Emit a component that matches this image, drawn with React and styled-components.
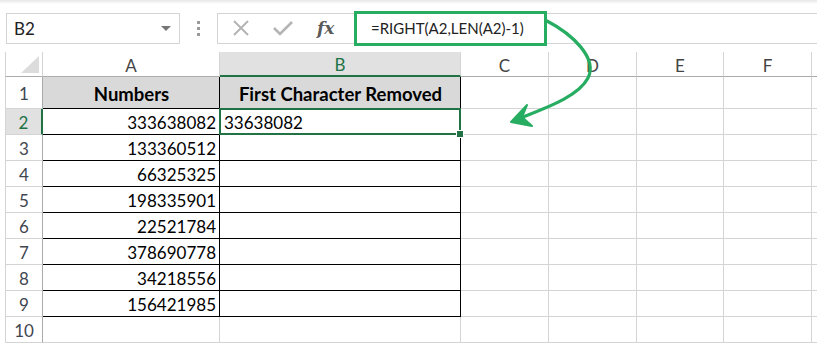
import React from 'react';
import styled, {createGlobalStyle} from 'styled-components';

//base page styles
const GlobalStyle = createGlobalStyle`
	body{
		margin: 0;
		background: #ffffff;
		font-family: Lato, "Open Sans", sans-serif;
	}
`

const columns = ['A', 'B', 'C', 'D', 'E', 'F'];
const numbers = ['333638082', '133360512', '66325325', '198335901', '22521784', '378690778', '34218556', '156421985'];

function App(){
	//builds the rows 2-10 of the sheet
	function getRows(){
		const rows = [];
		for(let r = 2; r <= 10; r++){
			const value = numbers[r - 2];
			const inTable = r <= 9;
			rows.push(
				<React.Fragment key={r}>
					<RowHead active={r === 2}>{r}</RowHead>
					<Cell table={inTable} align="right">{value}</Cell>
					<Cell table={inTable} selected={r === 2}>{r === 2 ? '33638082' : ''}</Cell>
					{columns.slice(2).map((c) => <Cell key={c}/>)}
					<Cell/>
				</React.Fragment>
			)
		}
		return rows;
	}

	return(
		<Page>
			<GlobalStyle/>
			<TopStrip/>
			<FormulaBar>
				<NameBox>
					<span>B2</span>
					<DropArrow/>
				</NameBox>
				<Grip>
					<i/><i/><i/>
				</Grip>
				<FxButtons>
					<svg width="20" height="20" viewBox="0 0 20 20">
						<path d="M3 3 L17 17 M17 3 L3 17" stroke="#b4b4b4" strokeWidth="2" fill="none"/>
					</svg>
					<svg width="22" height="20" viewBox="0 0 22 20">
						<path d="M2 10 L8 16 L20 4" stroke="#b4b4b4" strokeWidth="2.6" fill="none"/>
					</svg>
					<Fx>fx</Fx>
				</FxButtons>
				<FormulaInput>
					<Highlight>=RIGHT(A2,LEN(A2)-1)</Highlight>
				</FormulaInput>
			</FormulaBar>
			<Sheet>
				<Corner>
					<svg width="18" height="17" viewBox="0 0 18 17">
						<polygon points="18,0 18,17 0,17" fill="#dcdcdc"/>
					</svg>
				</Corner>
				{columns.map((c) => (
					<ColHead key={c} active={c === 'B'}>{c}</ColHead>
				))}
				<ColHead/>
				<RowHead>1</RowHead>
				<Cell table header align="center">Numbers</Cell>
				<Cell table header align="center">First Character Removed</Cell>
				{columns.slice(2).map((c) => <Cell key={c}/>)}
				<Cell/>
				{getRows()}
			</Sheet>
			<Arrow width="817" height="347" viewBox="0 0 817 347">
				<path d="M547 21 C 572 34, 598 58, 588 78 C 578 97, 545 108, 518 119" stroke="#27ad61" strokeWidth="3.2" fill="none" strokeLinecap="round"/>
				<polygon points="511,122 527,105 522,117 532,126" fill="#27ad61" stroke="#27ad61" strokeWidth="2" strokeLinejoin="round"/>
			</Arrow>
		</Page>
	);
}

const Page = styled.div`
	position: relative;
	width: 817px;
	height: 347px;
	overflow: hidden;
	background: #ffffff;
`

const TopStrip = styled.div`
	height: 4px;
	background: linear-gradient(#e6e6e6, #ffffff);
`

const FormulaBar = styled.div`
	display: flex;
	align-items: center;
	height: 48px;
	padding-left: 6px;
`

const NameBox = styled.div`
	box-sizing: border-box;
	width: 174px;
	height: 31px;
	border: 1px solid #d4d4d4;
	display: flex;
	align-items: center;
	justify-content: space-between;
	padding: 0 8px 0 7px;
	font-size: 17px;
	color: #222;
`

const DropArrow = styled.span`
	width: 0;
	height: 0;
	border-left: 5px solid transparent;
	border-right: 5px solid transparent;
	border-top: 5px solid #777;
`

const Grip = styled.div`
	width: 37px;
	display: flex;
	flex-direction: column;
	align-items: center;
	gap: 3px;
	i{
		width: 3px;
		height: 3px;
		background: #9a9a9a;
	}
`

const FxButtons = styled.div`
	box-sizing: border-box;
	width: 137px;
	height: 31px;
	border: 1px solid #d4d4d4;
	border-right: none;
	display: flex;
	align-items: center;
	padding-left: 13px;
	gap: 21px;
`

const Fx = styled.span`
	font-family: "DejaVu Serif", "Liberation Serif", serif;
	font-style: italic;
	font-weight: 700;
	font-size: 17px;
	color: #5a5a5a;
	margin-left: 2px;
`

const FormulaInput = styled.div`
	flex: 1;
	box-sizing: border-box;
	height: 31px;
	border-top: 1px solid #d4d4d4;
	border-bottom: 1px solid #d4d4d4;
	display: flex;
	align-items: center;
`

const Highlight = styled.div`
	box-sizing: border-box;
	width: 193px;
	height: 35px;
	border: 3px solid #27ad61;
	display: flex;
	align-items: center;
	padding-left: 14px;
	font-size: 15px;
	color: #222;
	white-space: nowrap;
`

const Sheet = styled.div`
	display: grid;
	grid-template-columns: 38px 177px 241px 88px 88px 87px 88px 1fr;
	grid-template-rows: 25px 32px repeat(9, 26px);
	margin-left: 5px;
	font-size: 17px;
`

const Corner = styled.div`
	box-sizing: border-box;
	border-left: 1px solid #d4d4d4;
	border-right: 1px solid #d4d4d4;
	border-bottom: 1px solid #ababab;
	display: flex;
	align-items: flex-end;
	justify-content: flex-end;
	padding: 0 3px 3px 0;
`

const ColHead = styled.div`
	box-sizing: border-box;
	display: flex;
	align-items: center;
	justify-content: center;
	background: ${(props) => props.active ? '#e1e1e1' : '#ffffff'};
	color: ${(props) => props.active ? '#217346' : '#444'};
	border-right: 1px solid #d4d4d4;
	border-bottom: ${(props) => props.active ? '2px solid #217346' : '1px solid #ababab'};
	padding-top: 2px;
`

const RowHead = styled.div`
	box-sizing: border-box;
	display: flex;
	align-items: center;
	justify-content: center;
	background: ${(props) => props.active ? '#e1e1e1' : '#ffffff'};
	color: ${(props) => props.active ? '#217346' : '#3f4650'};
	border-left: 1px solid #d4d4d4;
	border-bottom: 1px solid #d4d4d4;
	border-right: ${(props) => props.active ? '2px solid #217346' : '1px solid #ababab'};
	padding-top: 2px;
`

const Cell = styled.div`
	box-sizing: border-box;
	position: relative;
	display: flex;
	align-items: center;
	justify-content: ${(props) => props.align === 'right' ? 'flex-end' : props.align === 'center' ? 'center' : 'flex-start'};
	padding: 2px 3px 0 4px;
	white-space: nowrap;
	color: #000;
	font-size: ${(props) => props.header ? '18.5px' : '17px'};
	font-weight: ${(props) => props.header ? 700 : 400};
	background: ${(props) => props.header ? '#d9d9d9' : '#ffffff'};
	border-right: 1px solid ${(props) => props.table ? '#000' : '#d4d4d4'};
	border-bottom: 1px solid ${(props) => props.table ? '#000' : '#d4d4d4'};
	${(props) => props.selected && `
		&::after{
			content: '';
			position: absolute;
			top: -1px;
			left: -1px;
			right: -1px;
			bottom: -1px;
			border: 2px solid #217346;
		}
		&::before{
			content: '';
			position: absolute;
			right: -4px;
			bottom: -4px;
			width: 6px;
			height: 6px;
			background: #217346;
			border: 1px solid #fff;
			z-index: 2;
		}
	`}
`

const Arrow = styled.svg`
	position: absolute;
	top: 0;
	left: 0;
	pointer-events: none;
`

export default App;
